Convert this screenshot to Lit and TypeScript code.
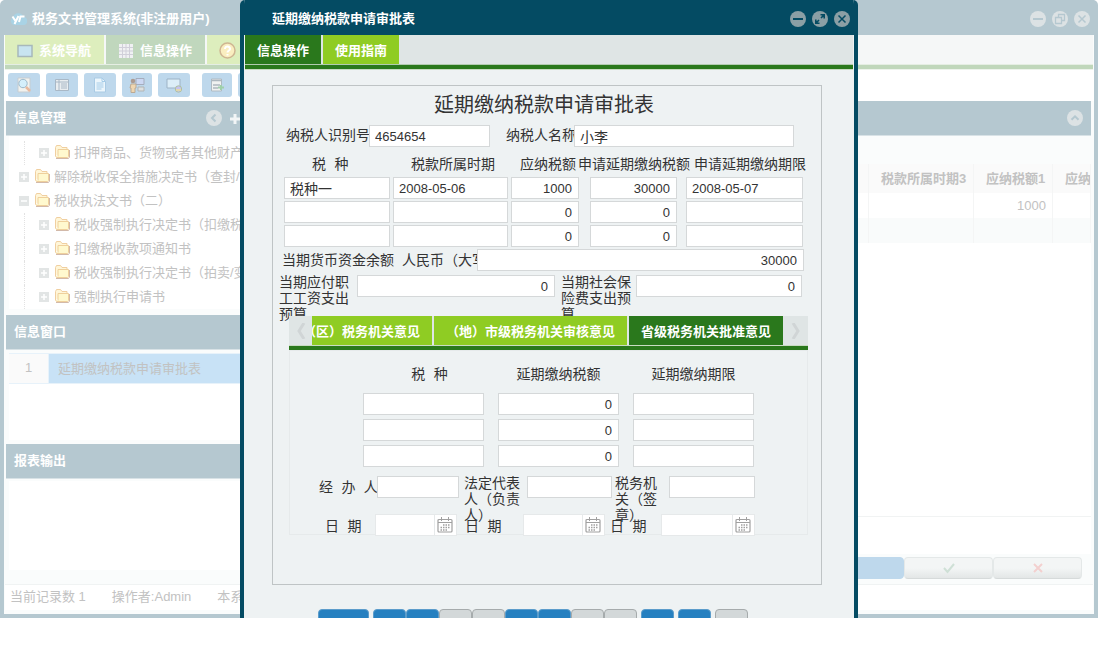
import { LitElement, html, svg, css } from "lit";
import { customElement } from "lit/decorators.js";

const circleIcon = (inner: unknown) => html`<svg viewBox="0 0 16 16" width="16" height="16" aria-hidden="true">
  <circle cx="8" cy="8" r="8" fill="currentColor"></circle>
  <g class="ink" fill="none" stroke-width="2">${inner}</g>
</svg>`;

const minus = svg`<path d="M3 8h10"/>`;
const cross = svg`<path d="M4.5 4.5l7 7M11.5 4.5l-7 7" stroke-width="1.5"/>`;
const expand = svg`<path d="M9 7l3-3M7 9l-3 3M8.5 3.8h3.7v3.7M3.8 8.5v3.7h3.7" stroke-width="1.6"/>`;
const restore = svg`<path d="M6.5 6V3.5h6v6H10M3.5 6.5h6v6h-6z" stroke-width="1.3"/>`;
const chevronUp = svg`<path d="M4.5 9.8L8 6.3l3.500 3.500"/>`;
const chevronLeft = svg`<path d="M9.500 4.500L6 8l3.500 3.500"/>`;

const folder = html`<svg class="folder" viewBox="0 0 16 14" width="16" height="14" aria-hidden="true">
  <path d="M1.500 11V2.500l1-2h4l1.500 2h5V4.500" fill="#fff6d8" stroke="#f0cfa0"/>
  <path d="M1.500 11l1 1.500h11l1-1v-7h-10.500v7" fill="#fff9cf" stroke="#efd09c"/>
  <path d="M2 13.500h12.500l1-1.500V5" fill="none" stroke="#d2b9a9"/>
</svg>`;

const calendar = html`<svg viewBox="0 0 16 16" width="16" height="16" aria-hidden="true">
  <rect x="1" y="2.500" width="14" height="12.500" rx="1" fill="#fff" stroke="#a0a0a0" stroke-width="1.200"/>
  <path d="M1 5.500h14M4.500 0v4M11.500 0v4" stroke="#a0a0a0" stroke-width="1"/>
  <path d="M6 8h7M3.500 10.500h9.500M3.500 13h7" stroke="#a0a0a0" stroke-width="1.300" stroke-dasharray="1.500 1"/>
</svg>`;

const toolIcons = [
  svg`<path d="M2 1h12v14H2z" fill="#f2f2ee" stroke="#c6cdd2"/><circle cx="7" cy="6.500" r="4.200" fill="#d5effb" stroke="#9cb9cc"/><path d="M10 10l4 4" stroke="#e8b99f" stroke-width="2.500"/>`,
  svg`<path d="M1.500 2.500h13v11h-13z" fill="#e9edf0" stroke="#a9b8c6"/><path d="M1.500 5h13M5 3v10M7 7h6M7 9h6M7 11h6" stroke="#a9b8c6"/>`,
  svg`<path d="M2.500 1h7.500l3.500 3.500V15h-11z" fill="#ecf6fc" stroke="#aacbe4"/><path d="M10 1v3.500h3.500M4.500 6h7M4.500 8h7M4.500 10h7M4.500 12h5" stroke="#a5cce8" fill="none"/>`,
  svg`<path d="M7 1.500h8v6H7z" fill="#ccd8f3" stroke="#a5adbd"/><path d="M9 10h6v4H9z" fill="#dde0e0" stroke="#b2b5b5"/><circle cx="4" cy="4" r="2.300" fill="#ad9b91"/><path d="M2 7h5v4H6v4.500H2V11H1z" fill="#efd6b0" stroke="#bcaa94"/>`,
  svg`<path d="M1 2h13v9H1z" fill="#dceef8" stroke="#9db3c6"/><circle cx="12.500" cy="12" r="3.200" fill="#c5c4f0" stroke="#afc19f"/><path d="M10 13h5" stroke="#eadc9b" stroke-width="1.500"/>`,
  svg`<path d="M2.500 2h10v12h-10z" fill="#f0f1f1" stroke="#afbac2"/><path d="M2.500 3.500h10M4 8h7M4 11h5" stroke="#adb7bf" stroke-width="1.500"/><path d="M9 10.500h6M12 8v5" stroke="#9fd0aa" stroke-width="2"/>`,
  svg`<path d="M3 2h9v12H3z" fill="#f0f1f1" stroke="#afbac2"/>`,
];

interface TreeRow { text: string; deep: boolean; open?: boolean }
const tree: TreeRow[] = [
  { text: "扣押商品、货物或者其他财产", deep: true },
  { text: "解除税收保全措施决定书（查封/", deep: false },
  { text: "税收执法文书（二）", deep: false, open: true },
  { text: "税收强制执行决定书（扣缴税", deep: true },
  { text: "扣缴税收款项通知书", deep: true },
  { text: "税收强制执行决定书（拍卖/变", deep: true },
  { text: "强制执行申请书", deep: true },
];

const taxHeads = ["税 种", "税款所属时期", "应纳税额", "申请延期缴纳税额", "申请延期缴纳期限"];
const taxRows = [
  ["税种一", "2008-05-06", "1000", "30000", "2008-05-07"],
  ["", "", "0", "0", ""],
  ["", "", "0", "0", ""],
];
const delayHeads = ["税 种", "延期缴纳税额", "延期缴纳期限"];
const delayRows = [["", "0", ""], ["", "0", ""], ["", "0", ""]];

@customElement("approval-form")
export class ApprovalForm extends LitElement {
  static styles = css`
    :host { display: block; color: #333; font: 14px/20px "Liberation Mono", "Noto Sans CJK SC", monospace; text-spacing-trim: space-all; }
    .sheet { border: 1px solid #bfc4c5; min-height: 498px; }
    h2 { margin: 0; padding: 3px 6px 0 0; font-size: 20px; line-height: 36px; font-weight: 400; text-align: center; }
    input { box-sizing: border-box; width: 100%; min-width: 0; height: 22px; border: 1px solid #d5d8d9; background: #fff; color: #333;
      padding: 0 6px 0 5px; margin: 0; border-radius: 0; outline: 0; font: 13px "Liberation Sans", "Noto Sans CJK SC", sans-serif; }
    .num { text-align: right; }
    .cjk { font-size: 14px; }
    .payer { display: grid; grid-template-columns: 83px 121px 84px 220px; padding-left: 13px; height: 22px; white-space: nowrap; }
    .payer label { overflow: hidden; line-height: 22px; }
    .payer .second { padding-left: 16px; }
    .heads { display: grid; grid-template-columns: 99px 109px 58px 116px 1fr; padding-left: 39px; margin: 8px 0 2px; white-space: nowrap; }
    .taxes { display: grid; grid-template-columns: 106px 115px 76px 93px 117px; column-gap: 3px; row-gap: 2px; padding-left: 11px; }
    .taxes .c2 { width: 68px; }
    .taxes .c3 { width: 87px; }
    .funds { display: grid; grid-template-columns: 120px 75px 327px; padding-left: 9px; margin-top: 2px; white-space: nowrap; height: 22px; line-height: 24px; }
    .funds label { overflow: hidden; }
    .budget { display: grid; grid-template-columns: 78px 198px 81px 166px; padding-left: 6px; margin-top: 4px; height: 41px; line-height: 16px; }
    .budget .second { padding-left: 6px; }
    .budget .wrap { width: 70px; display: block; }
    .tabbox { position: relative; margin: 0 13px 0 16px; }
    .strip { display: flex; height: 29px; background: #dfe5e5; border-bottom: 1px solid #c9dcc3; }
    .arrow { flex: none; width: 23px; padding: 0; border: 0; background: #dfe5e5; color: #d0d5d6; }
    .arrow.last { width: 25px; }
    .arrow svg { display: block; margin: auto; }
    .view { flex: 1; min-width: 0; display: flex; justify-content: flex-end; gap: 2px; overflow: hidden; }
    .tab { flex: none; border: 0; margin: 0; padding: 2px 12px 0; background: #8fcc23; color: #fff; white-space: nowrap; font: 700 13px/20px "Liberation Sans", "Noto Sans CJK SC", sans-serif; text-spacing-trim: space-all; }
    .tab.on { background: #2a781c; }
    .page { border-top: 4px solid #2a781c; background: #eef2f3; box-shadow: inset 0 0 0 1px #e6eaeb; height: 170px; padding-top: 15px; }
    .dheads, .delays { display: grid; grid-template-columns: 121px 121px 121px; gap: 4px 14px; padding-left: 74px; text-align: center; }
    .dheads { margin-bottom: 8px; height: 20px; }
    .dheads .first { padding-left: 12px; }
    .signs { display: grid; grid-template-columns: 58px 82px 68px 85px 57px 86px; padding-left: 30px; margin-top: 9px; height: 22px; }
    .signs label { line-height: 16px; }
    .signs .one { line-height: 24px; white-space: nowrap; overflow: hidden; }
    .signs .four { padding-left: 5px; }
    .signs .three { padding-left: 3px; }
    .dates { display: grid; grid-template-columns: 55px 82px 66px 82px 56px 94px; padding-left: 31px; margin-top: 16px; height: 22px; }
    .dates label { padding-left: 5px; line-height: 26px; white-space: nowrap; }
    .dates label:nth-of-type(2) { padding-left: 8px; }
    .dates .in { display: flex; background: #fff; border: 1px solid #e6e9ea; box-sizing: border-box; height: 22px; }
    .dates input { border: 0; height: 20px; flex: 1; }
    .dates button { flex: none; width: 22px; padding: 2px; border: 0; border-left: 1px solid #e6e9ea; background: #fff; }
    .dates svg { display: block; }
  `;

  render() {
    return html`<section class="sheet">
      <h2>延期缴纳税款申请审批表</h2>
      <div class="payer">
        <label for="pid">纳税人识别号</label><input id="pid" value="4654654">
        <label class="second" for="pname">纳税人名称</label><input id="pname" class="cjk" value="小李">
      </div>
      <div class="heads">${taxHeads.map((h, i) => html`<span id="t${i}">${h}</span>`)}</div>
      <div class="taxes">${taxRows.map((r) => r.map((v, i) => html`
        <input class="c${i} ${i === 2 || i === 3 ? "num" : ""} ${i === 0 ? "cjk" : ""}" aria-labelledby="t${i}" .value=${v}>`))}</div>
      <div class="funds">
        <label for="cash">当期货币资金余额</label><label for="cash">人民币（大写）</label>
        <input id="cash" class="num" value="30000">
      </div>
      <div class="budget">
        <label for="wage"><span class="wrap">当期应付职工工资支出预算</span></label><input id="wage" class="num" value="0">
        <label class="second" for="social"><span class="wrap">当期社会保险费支出预算</span></label><input id="social" class="num" value="0">
      </div>
      <div class="tabbox">
        <div class="strip">
          <button class="arrow" aria-label="向左"><svg width="10" height="16" viewBox="0 0 10 16"><path d="M8 0L3 8l5 8" fill="none" stroke="currentColor" stroke-width="3"/></svg></button>
          <div class="view" role="tablist">
            <button class="tab" role="tab">（区）税务机关意见</button>
            <button class="tab" role="tab">（地）市级税务机关审核意见</button>
            <button class="tab on" role="tab" aria-selected="true">省级税务机关批准意见</button>
          </div>
          <button class="arrow last" aria-label="向右"><svg width="10" height="16" viewBox="0 0 10 16"><path d="M2 0l5 8-5 8" fill="none" stroke="currentColor" stroke-width="3"/></svg></button>
        </div>
        <div class="page">
          <div class="dheads">${delayHeads.map((h, i) => html`<span id="d${i}" class=${i === 0 ? "first" : ""}>${h}</span>`)}</div>
          <div class="delays">${delayRows.map((r) => r.map((v, i) => html`
            <input class=${i === 1 ? "num" : ""} aria-labelledby="d${i}" .value=${v}>`))}</div>
          <div class="signs">
            <label class="one" for="s1">经 办 人</label><input id="s1">
            <label class="four" for="s2">法定代表人（负责人）</label><input id="s2">
            <label class="three" for="s3">税务机关（签章）</label><input id="s3">
          </div>
          <div class="dates">${[1, 2, 3].map((n) => html`
            <label for="date${n}">日 期</label>
            <span class="in"><input id="date${n}"><button aria-label="选择日期">${calendar}</button></span>`)}</div>
        </div>
      </div>
    </section>`;
  }
}

@customElement("form-dialog")
export class FormDialog extends LitElement {
  static styles = css`
    :host { display: flex; flex-direction: column; box-sizing: border-box; overflow: hidden; background: #eef2f3;
      border: solid #044b63; border-width: 0 4px; border-radius: 5px 5px 0 0; font: 13px/20px "Liberation Sans", "Noto Sans CJK SC", sans-serif; }
    header { flex: none; display: flex; align-items: center; height: 35px; box-sizing: border-box; padding: 2px 4px 0 28px; background: #044b63; color: #fff; }
    h1 { flex: 1; margin: 0; font-size: 13px; font-weight: 700; }
    .win { display: flex; gap: 6px; }
    .win button { width: 16px; height: 16px; padding: 0; border: 0; background: none; color: #8b9fa5; }
    .win svg { display: block; }
    .ink { stroke: #044b63; }
    nav { flex: none; display: flex; gap: 2px; height: 29px; margin: 0 1px; background: #dfe5e5; border-bottom: 1px solid #b2cbb0; }
    nav button { border: 0; padding: 2px 12px 0; background: #8fcc23; color: #fff; font: inherit; font-weight: 700; }
    nav button.on { background: #2a781c; }
    .rule { flex: none; height: 4px; margin: 0 1px; background: #2a781c; border-bottom: 1px solid #c9dcc3; }
    .body { padding: 15px 32px 0 28px; }
    .foot { display: flex; gap: 4px; margin-top: 24px; padding-left: 46px; }
    .set { display: flex; }
    .foot button { width: 33px; height: 24px; padding: 0; border: 1px solid #5b9ccb; border-radius: 4px; background: #2680c0; }
    .foot button.wide { width: 51px; }
    .foot button.off { border-color: #a6abac; background: #d3d8d9; }
  `;

  render() {
    const groups = [["wide"], ["", "", "off", "off", "", "", "off", "off"], [""], [""], ["off"]];
    return html`
      <header><h1>延期缴纳税款申请审批表</h1>
        <div class="win">
          <button aria-label="最小化">${circleIcon(minus)}</button>
          <button aria-label="最大化">${circleIcon(expand)}</button>
          <button aria-label="关闭">${circleIcon(cross)}</button>
        </div>
      </header>
      <nav><button class="on">信息操作</button><button>使用指南</button></nav>
      <div class="rule"></div>
      <div class="body"><approval-form></approval-form>
        <div class="foot">${groups.map((g) => html`<div class="set">${g.map((k) => html`<button class=${k} aria-label="操作"></button>`)}</div>`)}</div>
      </div>`;
  }
}

@customElement("app-root")
export class AppRoot extends LitElement {
  static styles = css`
    :host { display: block; position: relative; height: calc(100vh - 37px); overflow: hidden; background: #fff; color: #c2c2c2;
      font: 13px/20px "Liberation Sans", "Noto Sans CJK SC", sans-serif; text-spacing-trim: space-all; }
    .window { display: flex; flex-direction: column; box-sizing: border-box; height: 100%; margin-right: 1px;
      border: solid #b5c8d0; border-width: 0 4px 4px; border-radius: 5px 5px 0 0; background: #fafcfc; }
    .title { flex: none; display: flex; align-items: center; gap: 5px; box-sizing: border-box; height: 35px; padding: 2px 4px 0 6px; background: #b5c8d0; color: #fff; }
    h1 { flex: 1; margin: 0; font-size: 13px; font-weight: 700; }
    .win { display: flex; gap: 6px; }
    .win button, .round { width: 16px; height: 16px; padding: 0; border: 0; background: none; color: #dce2e4; }
    .win svg, .round svg { display: block; }
    .ink { stroke: #b5c8d0; }
    nav { flex: none; display: flex; gap: 2px; height: 29px; margin: 0 1px; background: #f5f7f7; border-bottom: 1px solid #e5eee3; }
    nav button { display: flex; align-items: center; gap: 6px; padding: 2px 13px 0 12px; border: 0; background: #ddeebd; color: #fff; font: inherit; font-weight: 700; }
    nav button.on { background: #c0d7bd; }
    .rule { flex: none; height: 4px; margin: 0 1px; background: #c0d7bb; border-bottom: 1px solid #edf3ec; }
    .tools { flex: none; display: flex; gap: 6px; box-sizing: border-box; height: 31px; padding: 3px 4px; background: #fff; }
    .tools button { flex: none; width: 32px; height: 24px; padding: 0; border: 0; border-radius: 3px; background: #bed8ec; }
    .tools button:nth-child(4), .tools button:nth-child(6) { width: 30px; }
    .tools button:nth-child(6) { margin-left: 6px; }
    .tools svg { display: block; margin: auto; }
    .main { flex: 1; min-height: 0; display: flex; gap: 5px; margin: 0 3px 0 2px; }
    .side { flex: none; width: 260px; display: flex; flex-direction: column; }
    .bar { flex: none; display: flex; align-items: center; box-sizing: border-box; height: 35px; padding: 0 8px; border-bottom: 1px solid #d8e2e6; background: #b5c8d0; color: #fff; }
    h2 { flex: 1; margin: 0; font-size: 13px; font-weight: 700; }
    .bar .plus { width: 14px; height: 14px; padding: 0; margin: 2px 16px 0 6px; border: 0; background: none; }
    .bar .plus svg { display: block; }
    .tree { flex: none; height: 168px; margin: 0 0 1px 3px; padding: 5px 0 0; list-style: none; background: #fff; white-space: nowrap; overflow: hidden; border-bottom: 5px solid #fafcfc; }
    .tree li { display: flex; align-items: center; height: 24px; padding-left: 10px; }
    .tree li.deep { padding-left: 14px; margin-left: 15px; border-left: 1px dotted #e2e2e2; }
    .box { flex: none; width: 10px; height: 10px; margin-right: 5px; }
    .folder { flex: none; margin: 0 4px 2px 0; }
    .tree span { flex: none; }
    .list { flex: none; height: 87px; margin: 3px 0 4px 3px; background: #fff; }
    .item { display: flex; align-items: center; height: 29px; border: solid #e7f2fa; border-width: 1px 0; background: #c8e2f6; }
    .item .n { width: 39px; height: 29px; line-height: 27px; text-align: center; background: #fafafa; border-right: 1px solid #e7f2fa; margin-right: 9px; }
    .out { flex: 1; margin: 2px 0 14px 3px; background: #fff; }
    .content { flex: 1; min-width: 0; display: flex; flex-direction: column; }
    .gap { flex: none; height: 28px; }
    table { width: 100%; table-layout: fixed; border-collapse: collapse; background: #fff; }
    th, td { height: 25px; padding: 0 6px 0 12px; border-right: 1px solid #f4f5f5; text-align: left; white-space: nowrap; overflow: hidden; font-size: 13px; }
    th { height: 29px; background: #fafafa; }
    td { text-align: right; }
    .alt td { background: #f9fbfb; }
    .blank { flex: 1; background: #fff; }
    .pager { flex: none; height: 37px; border-top: 1px solid #f1f3f3; background: #fff; }
    .acts { flex: none; display: flex; justify-content: flex-end; height: 22px; padding: 3px 9px 5px 0; }
    .acts button { width: 89px; height: 22px; padding: 0; border: 1px solid #e4e8e8; border-bottom-color: #d6dada; border-radius: 4px; background: linear-gradient(#f3f5f5 50%, #e3e6e6); }
    .acts button.blue { background: #bed8ec; border-color: #bed8ec; }
    .acts svg { display: block; margin: auto; }
    .status { flex: none; display: flex; gap: 26px; height: 25px; line-height: 24px; padding-left: 5px; margin: 0 1px 4px; border-top: 1px solid #f0f3f3; background: #fff; }
    form-dialog { position: absolute; top: 0; left: 240px; width: 618px; height: 100%; }
  `;

  render() {
    return html`
      <div class="window">
        <div class="title">
          <svg width="17" height="16" viewBox="0 0 17 16" aria-hidden="true">
            <path d="M4 14a4 4 0 0 1-1-7.500 5.500 5.500 0 0 1 10.500-.5A4 4 0 0 1 13 14z" fill="#a9d3e5"/>
            <path d="M2.500 5.500l3 4.500M8.500 5L4.500 13M9 11l1.500-5.500h4" stroke="#fff" stroke-width="2" fill="none"/>
          </svg>
          <h1>税务文书管理系统(非注册用户)</h1>
          <div class="win">
            <button aria-label="最小化">${circleIcon(minus)}</button>
            <button aria-label="还原">${circleIcon(restore)}</button>
            <button aria-label="关闭">${circleIcon(cross)}</button>
          </div>
        </div>
        <nav>
          <button><svg width="16" height="14" viewBox="0 0 16 14"><path d="M1 1.500h14v11H1z" fill="#c8e4f0" stroke="#a7b8bb" stroke-width="1.500"/></svg>系统导航</button>
          <button class="on"><svg width="16" height="16" viewBox="0 0 16 16"><path d="M1 1h14v14H1z" fill="#f0f1f3"/><path d="M1 4.500h14M1 8h14M1 11.500h14M4.500 1v14M8 1v14M11.500 1v14" stroke="#d0cfd9"/></svg>信息操作</button>
          <button aria-label="帮助"><svg width="17" height="17" viewBox="0 0 17 17"><circle cx="8.500" cy="8.500" r="7.500" fill="#faeec0" stroke="#cfb692" stroke-width="1.500"/><path d="M6 7c0-3.500 5-3 5 0 0 1.500-2.500 1.500-2.500 3.500M8.500 12v1.500" stroke="#fff" stroke-width="2" fill="none"/></svg></button>
        </nav>
        <div class="rule"></div>
        <div class="tools">${toolIcons.map((i) => html`<button aria-label="工具"><svg width="16" height="16" viewBox="0 0 16 16">${i}</svg></button>`)}</div>
        <div class="main">
          <aside class="side">
            <div class="bar"><h2>信息管理</h2>
              <button class="round" aria-label="收起">${circleIcon(chevronLeft)}</button>
              <button class="plus" aria-label="展开"><svg width="14" height="14" viewBox="0 0 14 14"><path d="M7 2v10M2 7h10" stroke="#f2f5f6" stroke-width="3"/></svg></button>
            </div>
            <ul class="tree">${tree.map((r) => html`<li class=${r.deep ? "deep" : ""}>
              <svg class="box" viewBox="0 0 10 10"><path d="M0 0h10v10H0z" fill="#e2e5e5"/><path d=${r.open ? "M2 5h6" : "M2 5h6M5 2v6"} stroke="#fff" stroke-width="1.500"/></svg>
              ${folder}<span>${r.text}</span></li>`)}</ul>
            <div class="bar"><h2>信息窗口</h2></div>
            <div class="list"><div class="item"><span class="n">1</span><span>延期缴纳税款申请审批表</span></div></div>
            <div class="bar"><h2>报表输出</h2></div>
            <div class="out"></div>
          </aside>
          <section class="content">
            <div class="bar"><h2></h2><button class="round" aria-label="折叠">${circleIcon(chevronUp)}</button></div>
            <div class="gap"></div>
            <table>
              <colgroup><col><col width="105"><col width="79"><col width="38"></colgroup>
              <thead><tr><th></th><th>税款所属时期3</th><th>应纳税额1</th><th>应纳</th></tr></thead>
              <tbody><tr><td></td><td></td><td>1000</td><td></td></tr>
              <tr class="alt"><td></td><td></td><td></td><td></td></tr></tbody>
            </table>
            <div class="blank"></div>
            <div class="pager"></div>
            <div class="acts">
              <button class="blue" aria-label="上移"></button>
              <button aria-label="确定"><svg width="14" height="12" viewBox="0 0 14 12"><path d="M2 6l3.500 4L12 2" fill="none" stroke="#cfe0d6" stroke-width="2"/></svg></button>
              <button aria-label="取消"><svg width="12" height="12" viewBox="0 0 12 12"><path d="M2 2l8 8M10 2l-8 8" stroke="#f3d0cf" stroke-width="2"/></svg></button>
            </div>
          </section>
        </div>
        <footer class="status"><span>当前记录数 1</span><span>操作者:Admin</span><span>本系统</span></footer>
      </div>
      <form-dialog></form-dialog>`;
  }
}
